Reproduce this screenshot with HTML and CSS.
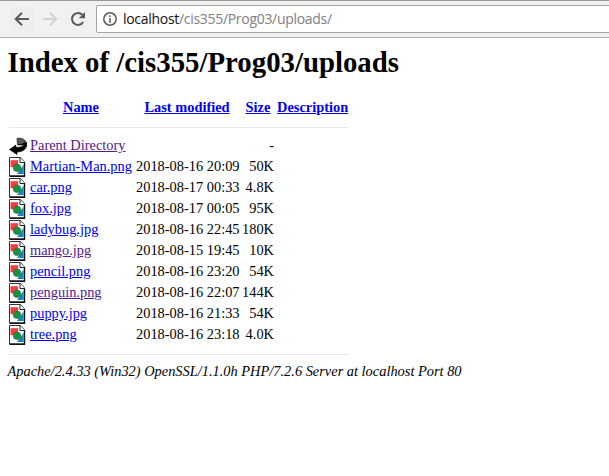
FILE: index.html
```
<!DOCTYPE html>
<html lang="en">
<head>
<meta charset="utf-8">
<title>Index of /cis355/Prog03/uploads</title>
<link rel="stylesheet" href="styles.css">
</head>
<body>
<svg class="defs" width="0" height="0" aria-hidden="true">
  <symbol id="image" viewBox="0 0 18 20">
    <path d="M.5 .5h11l4 4.5v14H.5z" fill="#fff" stroke="#333"/>
    <path d="M15.5 5v14.3H.5" fill="none" stroke="#111" stroke-width="1.4"/>
    <path d="M11 .5v5h4.5" fill="#fff" stroke="#222"/>
    <path d="M1.5 3.2H9v7H1.5z" fill="#f83b3d"/>
    <path d="M14.7 7.5V17H8z" fill="#1685b8"/>
    <circle cx="8" cy="10.8" r="3.8" fill="#159342" stroke="#34654a" stroke-width=".6"/>
  </symbol>
  <symbol id="back" viewBox="0 0 18 20">
    <path d="M7.5 2.2C11 .8 17.5 3 17.5 7v4l-4-2.5-5.5.3z" fill="#4c4c4c"/>
    <path d="M8.5 8.8 17.8 6.5C18.5 13 14 15.8 8 16v2.6L.5 13.5 6.8 9v2.3c4 .2 7-.5 8.5-2z" fill="#000" stroke="#000" stroke-width=".6"/>
    <path d="M9 3.5l5 1.5M9 5.5l6 1M9 7.5l5 .4" stroke="#777" stroke-width=".5"/>
  </symbol>
</svg>
<header class="toolbar">
  <span class="tool back"><svg width="16" height="16" viewBox="0 0 16 16"><path d="M15 8H2M8 1.7 1.7 8 8 14.3"/></svg></span>
  <span class="tool forward"><svg width="16" height="16" viewBox="0 0 16 16"><path d="M1 8h13M8 1.7 14.3 8 8 14.3"/></svg></span>
  <span class="tool reload"><svg width="16" height="16" viewBox="0 0 16 16"><path d="M13.2 11A6 6 0 1 1 12.4 3.8"/><path class="tip" d="M15 1v6.2H8.8z"/></svg></span>
  <div class="address-bar">
    <svg class="info" width="14" height="14" viewBox="0 0 14 14"><circle cx="7" cy="7" r="6.2"/><path d="M7 3.2v1.7M7 6v4.8"/></svg>
    <span class="url"><b>localhost</b>/cis355/Prog03/uploads/</span>
  </div>
</header>
<main>
  <h1>Index of /cis355/Prog03/uploads</h1>
  <table>
    <colgroup><col class="c-icon"><col class="c-name"><col class="c-date"><col class="c-size"><col class="c-desc"></colgroup>
    <tr><th></th><th><a href="#">Name</a></th><th><a href="#">Last modified</a></th><th><a href="#">Size</a></th><th><a href="#">Description</a></th></tr>
    <tr class="rule"><td colspan="5"><hr></td></tr>
    <tr><td><svg class="icon"><use href="#back"/></svg></td><td><a class="visited" href="#">Parent Directory</a></td><td></td><td class="size">-</td><td></td></tr>
    <tr><td><svg class="icon"><use href="#image"/></svg></td><td><a href="#">Martian-Man.png</a></td><td>2018-08-16 20:09</td><td class="size">50K</td><td></td></tr>
    <tr><td><svg class="icon"><use href="#image"/></svg></td><td><a href="#">car.png</a></td><td>2018-08-17 00:33</td><td class="size">4.8K</td><td></td></tr>
    <tr><td><svg class="icon"><use href="#image"/></svg></td><td><a href="#">fox.jpg</a></td><td>2018-08-17 00:05</td><td class="size">95K</td><td></td></tr>
    <tr><td><svg class="icon"><use href="#image"/></svg></td><td><a href="#">ladybug.jpg</a></td><td>2018-08-16 22:45</td><td class="size">180K</td><td></td></tr>
    <tr><td><svg class="icon"><use href="#image"/></svg></td><td><a class="visited" href="#">mango.jpg</a></td><td>2018-08-15 19:45</td><td class="size">10K</td><td></td></tr>
    <tr><td><svg class="icon"><use href="#image"/></svg></td><td><a href="#">pencil.png</a></td><td>2018-08-16 23:20</td><td class="size">54K</td><td></td></tr>
    <tr><td><svg class="icon"><use href="#image"/></svg></td><td><a class="visited" href="#">penguin.png</a></td><td>2018-08-16 22:07</td><td class="size">144K</td><td></td></tr>
    <tr><td><svg class="icon"><use href="#image"/></svg></td><td><a href="#">puppy.jpg</a></td><td>2018-08-16 21:33</td><td class="size">54K</td><td></td></tr>
    <tr><td><svg class="icon"><use href="#image"/></svg></td><td><a href="#">tree.png</a></td><td>2018-08-16 23:18</td><td class="size">4.0K</td><td></td></tr>
    <tr class="rule"><td colspan="5"><hr></td></tr>
  </table>
  <address>Apache/2.4.33 (Win32) OpenSSL/1.1.0h PHP/7.2.6 Server at localhost Port 80</address>
</main>
</body>
</html>
```
FILE: styles.css
```
* { box-sizing: border-box; }
body {
  margin: 0;
  background: #fff;
  color: #000;
  font: 14.4px/21px "Liberation Serif", "Times New Roman", serif;
}
.defs { display: block; height: 0; }
.toolbar {
  display: flex;
  align-items: center;
  height: 38px;
  padding-left: 10px;
  background: #f2f1f2;
  border-top: 1px solid #999;
  border-bottom: 1px solid #b4b3b4;
}
.tool {
  display: flex;
  align-items: center;
  justify-content: center;
  width: 24px;
  height: 24px;
  margin-right: 4px;
}
.tool svg { fill: none; stroke: #5a5a5f; stroke-width: 2; }
.back { background: #efeeee; }
.forward svg { stroke: #d2d2d2; }
.tool .tip { fill: #5a5a5f; stroke: none; }
.address-bar {
  display: flex;
  align-items: center;
  flex: 1;
  height: 28px;
  margin-left: 2px;
  margin-right: -4px;
  padding-left: 6px;
  background: #fff;
  border: 1px solid #a5a4a5;
  border-radius: 2px;
}
.info { margin-right: 6px; fill: none; stroke: #5a5a5a; stroke-width: 1.5; }
.url { color: #808080; font: 14px/20px "Open Sans", "Noto Sans", sans-serif; letter-spacing: -.3px; white-space: nowrap; }
.url b { color: #111; font-weight: 400; }
main { padding: 0 7px; }
h1 { margin: 8px 0 18px .5px; font-size: 28.8px; line-height: 33px; white-space: nowrap; }
table { width: 340px; margin-left: 1px; table-layout: fixed; border-collapse: collapse; }
.c-icon { width: 22px; }
.c-name { width: 106px; }
.c-date { width: 106px; }
.c-size { width: 35px; }
.c-desc { width: 71px; }
th, td { height: 21px; padding: 0; white-space: nowrap; text-align: left; }
th { text-align: center; }
th:nth-child(2), th:nth-child(3) { padding-right: 4px; }
th:nth-child(4) { padding-right: 3px; }
.size { padding-right: 3px; text-align: right; }
.rule td { height: 17px; padding-top: 2px; line-height: 0; }
hr { height: 1px; margin: 0 0 0 1px; border: 0; background: #e7e7e7; }
.icon { display: block; width: 18px; height: 20px; margin-left: 1px; }
a { color: #00e; text-decoration: underline; }
a.visited { color: #551a8b; }
address { margin: -1px 0 0 .5px; font-style: italic; white-space: nowrap; }
```
